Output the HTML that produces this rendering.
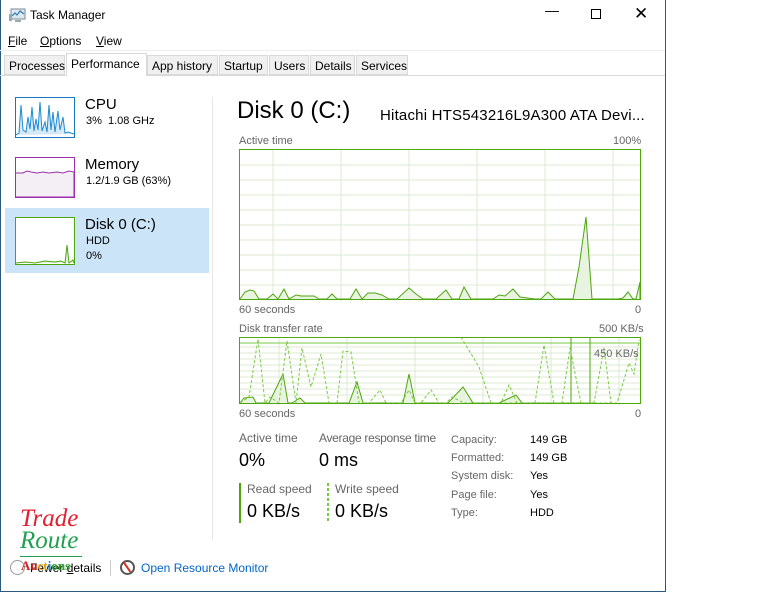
<!DOCTYPE html>
<html><head><meta charset="utf-8"><style>
*{margin:0;padding:0;box-sizing:border-box}
body{width:768px;height:593px;background:#fff;font-family:"Liberation Sans",sans-serif;position:relative;overflow:hidden;color:#000}
.a{position:absolute;white-space:nowrap}
.win{position:absolute;left:0;top:0;width:666px;height:592px;border:1px solid #2b5a7e;border-top:none;background:#fff}
.tab{position:absolute;top:55px;height:20px;font-size:12px;background:#f0f0f0;border:1px solid #d9d9d9;padding:3px 4px 0 4px}
.g{color:#666;font-size:11px}
</style></head><body>
<div class="win"></div>
<svg class="a" style="left:9px;top:8px" width="17" height="15" viewBox="0 0 17 15"><rect x="2" y="1" width="14" height="10" fill="#dfe8ef" stroke="#7a8a99"/><polyline points="3,8 6,5 8,7 11,3 15,6" fill="none" stroke="#2a7ab8" stroke-width="1.2"/><rect x="0" y="6" width="3" height="7" fill="#9aa"/><rect x="6" y="12" width="6" height="2" fill="#9aa"/></svg>
<div class="a" style="left:30px;top:8px;font-size:12px">Task Manager</div>
<div class="a" style="left:545px;top:2px;font-size:14px">&#8212;</div>
<div class="a" style="left:591px;top:9px;width:10px;height:10px;border:1px solid #000"></div>
<div class="a" style="left:634px;top:4px;font-size:17px">&#10005;</div>
<div class="a" style="left:8px;top:34px;font-size:12px"><u>F</u>ile</div>
<div class="a" style="left:40px;top:34px;font-size:12px"><u>O</u>ptions</div>
<div class="a" style="left:96px;top:34px;font-size:12px"><u>V</u>iew</div>
<div class="a" style="left:0;top:50px;width:665px;height:1px;background:#eee"></div>
<div class="a" style="left:0;top:75px;width:665px;height:1px;background:#d9d9d9"></div>
<div class="tab" style="left:4px;width:61px">Processes</div>
<div class="tab" style="left:147px;width:71px">App history</div>
<div class="tab" style="left:219px;width:49px">Startup</div>
<div class="tab" style="left:269px;width:40px">Users</div>
<div class="tab" style="left:310px;width:45px">Details</div>
<div class="tab" style="left:356px;width:52px">Services</div>
<div class="tab" style="left:66px;top:53px;height:23px;width:81px;background:#fff;border-bottom:none;padding-top:3px">Performance</div>
<div class="a" style="left:212px;top:97px;width:1px;height:443px;background:#e6e6e6"></div>
<div class="a" style="left:5px;top:208px;width:204px;height:65px;background:#cce4f7"></div>
<svg class="a" style="left:15px;top:97px" width="60" height="41"><rect x="0.5" y="0.5" width="59" height="40" fill="#fff" stroke="#1778c0"/><polyline points="1,38 4,36 6,8 8,33 11,35 13,20 15,32 17,10 19,34 21,22 23,33 25,5 27,34 30,25 32,35 34,8 36,33 38,15 40,35 43,14 45,33 48,20 50,36 53,35 59,37" fill="#d6e9f7" stroke="#1f8ad2" stroke-width="1"/></svg>
<div class="a" style="left:85px;top:96px;font-size:15px">CPU</div>
<div class="a" style="left:86px;top:115px;font-size:11px">3%&nbsp; 1.08 GHz</div>
<svg class="a" style="left:15px;top:157px" width="60" height="41"><rect x="0.5" y="0.5" width="59" height="40" fill="#fff" stroke="#9b2fae"/><polyline points="1,16 8,16 12,14 16,15 22,16 28,15 34,16 42,15 48,16 54,14 59,15 59,40 1,40" fill="#f4eef5" stroke="#9b2fae"/></svg>
<div class="a" style="left:85px;top:156px;font-size:15px">Memory</div>
<div class="a" style="left:86px;top:175px;font-size:11px">1.2/1.9 GB (63%)</div>
<svg class="a" style="left:15px;top:217px" width="60" height="48"><rect x="0.5" y="0.5" width="59" height="47" fill="#fff" stroke="#4da60c"/><polyline points="1,46 10,45 20,46 30,44 40,45 46,44 50,46 52,28 54,46 58,43 59,46" fill="#e6f3dc" stroke="#4da60c"/></svg>
<div class="a" style="left:85px;top:216px;font-size:15px">Disk 0 (C:)</div>
<div class="a" style="left:86px;top:235px;font-size:11px">HDD</div>
<div class="a" style="left:86px;top:250px;font-size:11px">0%</div>
<div class="a" style="left:237px;top:97px;font-size:24px">Disk 0 (C:)</div>
<div class="a" style="left:380px;top:107px;font-size:15px;letter-spacing:0.2px">Hitachi HTS543216L9A300 ATA Devi...</div>
<div class="a g" style="left:239px;top:135px">Active time</div>
<div class="a g" style="left:613px;top:135px">100%</div>
<svg class="a" style="left:239px;top:149px" width="402" height="152">
<g stroke="#dcebd0" stroke-width="1">
<line x1="0" y1="16" x2="402" y2="16"/><line x1="0" y1="31" x2="402" y2="31"/><line x1="0" y1="46" x2="402" y2="46"/><line x1="0" y1="61" x2="402" y2="61"/><line x1="0" y1="76" x2="402" y2="76"/><line x1="0" y1="91" x2="402" y2="91"/><line x1="0" y1="106" x2="402" y2="106"/><line x1="0" y1="121" x2="402" y2="121"/><line x1="0" y1="136" x2="402" y2="136"/>
<line x1="34" y1="0" x2="34" y2="152"/><line x1="102" y1="0" x2="102" y2="152"/><line x1="170" y1="0" x2="170" y2="152"/><line x1="238" y1="0" x2="238" y2="152"/><line x1="306" y1="0" x2="306" y2="152"/><line x1="374" y1="0" x2="374" y2="152"/>
</g>
<polyline points="1,150 6,143 11,141 15,142 20,150 28,150 34,145 39,150 45,140 50,150 57,146 62,147 70,147 75,147 80,150 88,150 93,145 98,150 111,150 117,140 123,150 129,144 136,144 143,146 150,150 158,150 170,139 177,145 184,150 193,150 197,150 207,141 213,150 220,150 225,138 232,150 248,150 254,150 260,146 266,147 274,140 281,148 288,149 296,150 302,150 309,143 316,150 334,150 340,118 347,68 353,150 369,150 379,150 384,149 389,143 394,150 397,150 401,133 401,150" fill="#e9f4e0" stroke="#4da60c" stroke-width="1"/>
<rect x="0.5" y="0.5" width="401" height="150" fill="none" stroke="#4da60c"/>
</svg>
<div class="a g" style="left:239px;top:304px">60 seconds</div>
<div class="a g" style="left:635px;top:304px">0</div>
<div class="a g" style="left:239px;top:323px">Disk transfer rate</div>
<div class="a g" style="left:599px;top:323px">500 KB/s</div>
<svg class="a" style="left:239px;top:337px" width="402" height="68">
<g stroke="#dcebd0" stroke-width="1">
<line x1="0" y1="10" x2="402" y2="10"/><line x1="0" y1="16" x2="402" y2="16"/><line x1="0" y1="22" x2="402" y2="22"/><line x1="0" y1="28" x2="402" y2="28"/><line x1="0" y1="34" x2="402" y2="34"/><line x1="0" y1="40" x2="402" y2="40"/><line x1="0" y1="46" x2="402" y2="46"/><line x1="0" y1="52" x2="402" y2="52"/><line x1="0" y1="58" x2="402" y2="58"/>
<line x1="40" y1="0" x2="40" y2="68"/><line x1="108" y1="0" x2="108" y2="68"/><line x1="176" y1="0" x2="176" y2="68"/><line x1="244" y1="0" x2="244" y2="68"/><line x1="312" y1="0" x2="312" y2="68"/><line x1="380" y1="0" x2="380" y2="68"/>
</g>
<line x1="0" y1="6" x2="402" y2="6" stroke="#7ac943" stroke-width="1"/>
<line x1="332" y1="1" x2="332" y2="66" stroke="#4da60c"/><line x1="351" y1="1" x2="351" y2="66" stroke="#4da60c"/>
<polyline points="1,66 5,61 14,60 17,66 25,66 30,66 44,37 49,66 53,66 61,61 66,66 110,66 118,45 124,66 164,66 170,37 176,66 180,66 209,66 224,50 234,66 260,66 277,58 283,66 345,66 355,66" fill="#e9f4e0" stroke="#4da60c" stroke-width="1"/>
<polyline points="1,66 10,60 19,2 26,66 31,60 40,66 48,4 57,66 63,11 72,50 82,17 90,66 98,66 104,14 112,15 120,66 130,66 141,53 147,66 162,66 170,53 176,66 182,66 192,53 200,66 207,66 213,60 225,66 378,66 390,26 395,37 400,3" fill="none" stroke="#7ac943" stroke-width="1" stroke-dasharray="3,2"/>
<polyline points="222,0 240,30 252,66 262,66 270,48 278,66 296,66 305,8 315,66 323,66 331,11 342,66 355,66 365,11 372,66" fill="none" stroke="#7ac943" stroke-width="1" stroke-dasharray="3,2"/>
<rect x="0.5" y="0.5" width="401" height="66" fill="none" stroke="#4da60c"/>
</svg>
<div class="a g" style="left:594px;top:348px;font-size:11px">450 KB/s</div>
<div class="a g" style="left:239px;top:408px">60 seconds</div>
<div class="a g" style="left:635px;top:408px">0</div>
<div class="a g" style="left:239px;top:431px;font-size:12px">Active time</div>
<div class="a" style="left:239px;top:450px;font-size:18px">0%</div>
<div class="a g" style="left:319px;top:431px;font-size:12px;letter-spacing:-0.3px">Average response time</div>
<div class="a" style="left:319px;top:450px;font-size:18px">0 ms</div>
<div class="a" style="left:239px;top:483px;width:2px;height:40px;background:#4da60c"></div>
<div class="a g" style="left:247px;top:482px;font-size:12px">Read speed</div>
<div class="a" style="left:247px;top:501px;font-size:18px">0 KB/s</div>
<div class="a" style="left:327px;top:483px;width:2px;height:40px;background:repeating-linear-gradient(#7ac943 0 3px,transparent 3px 5px)"></div>
<div class="a g" style="left:335px;top:482px;font-size:12px">Write speed</div>
<div class="a" style="left:335px;top:501px;font-size:18px">0 KB/s</div>
<div class="a g" style="left:451px;top:431px;font-size:11px;line-height:18.2px">Capacity:<br>Formatted:<br>System disk:<br>Page file:<br>Type:</div>
<div class="a" style="left:530px;top:431px;font-size:11px;line-height:18.2px">149 GB<br>149 GB<br>Yes<br>Yes<br>HDD</div>
<div class="a" style="left:20px;top:505px;font-family:'Liberation Serif',serif;font-style:italic;font-size:25px;color:#e02030">Trade</div>
<div class="a" style="left:20px;top:527px;font-family:'Liberation Serif',serif;font-style:italic;font-size:25px;color:#20a050">Route</div>
<div class="a" style="left:20px;top:556px;width:62px;height:1px;background:#20a050"></div>
<div class="a" style="left:10px;top:560px;width:15px;height:15px;border:1px solid #999;border-radius:50%"></div>
<div class="a" style="left:30px;top:561px;font-size:12px">Fewer <u>d</u>etails</div>
<div class="a" style="left:21px;top:558px;font-size:13px;font-weight:bold;font-family:'Liberation Serif',serif;color:#d02020">Au<span style="color:#e0a000">ct</span><span style="color:#2080d0">i</span><span style="color:#30a030">ons</span></div>
<div class="a" style="left:110px;top:560px;width:1px;height:16px;background:#ccc"></div>
<div class="a" style="left:120px;top:560px;width:15px;height:15px;border:2px solid #555;border-radius:50%;background:#fff"></div>
<div class="a" style="left:126px;top:561px;width:2px;height:12px;background:#d03020;transform:rotate(-35deg)"></div>
<div class="a" style="left:141px;top:561px;font-size:12px;color:#0066cc">Open Resource Monitor</div>
</body></html>
